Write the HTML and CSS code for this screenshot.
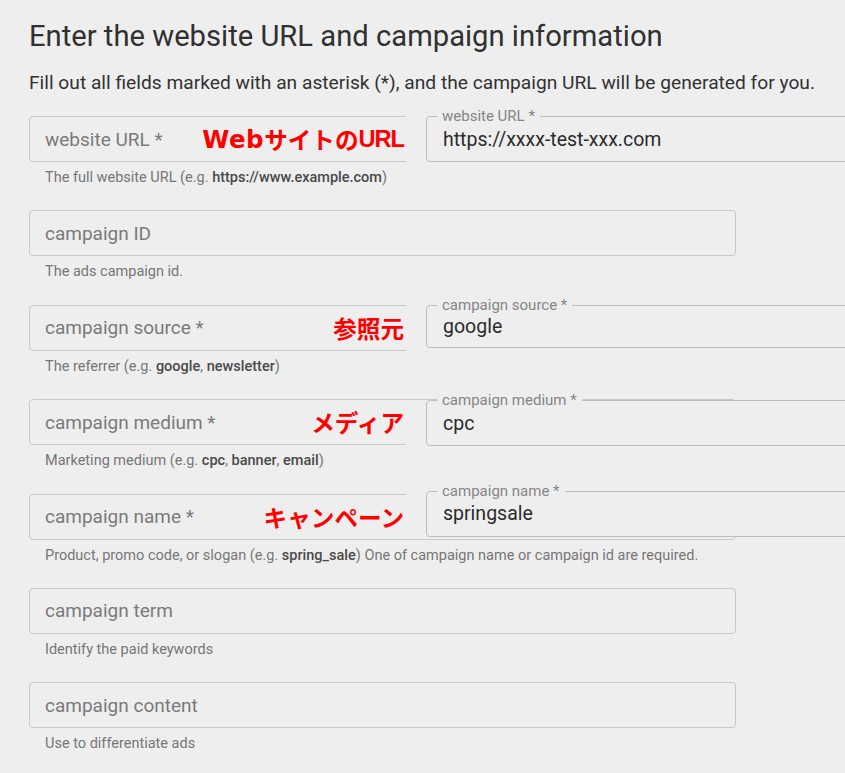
FILE: index.html
```html
<!DOCTYPE html>
<html lang="en">
<head>
<meta charset="utf-8">
<title>Campaign URL Builder</title>
<link rel="stylesheet" href="styles.css">
</head>
<body>
<main class="page">
  <h1 class="title">Enter the website URL and campaign information</h1>
  <p class="lead">Fill out all fields marked with an asterisk (*), and the campaign URL will be generated for you.</p>

  <div class="form">
    <div class="row">
      <div class="field">
        <span class="ph">website URL *</span>
        <span class="note"><span class="latin latin--wide">Web</span>サイトの<span class="latin latin--tight">URL</span></span>
        <div class="fill">
          <div class="fill-box">
            <span class="fill-label">website URL *</span>
            <span class="fill-value">https://xxxx-test-xxx.com</span>
          </div>
        </div>
      </div>
      <div class="help">The full website URL (e.g. <b>https://www.example.com</b>)</div>
    </div>

    <div class="row">
      <div class="field"><span class="ph">campaign ID</span></div>
      <div class="help">The ads campaign id.</div>
    </div>

    <div class="row">
      <div class="field">
        <span class="ph">campaign source *</span>
        <span class="note">参照元</span>
        <div class="fill fill--short">
          <div class="fill-box">
            <span class="fill-label">campaign source *</span>
            <span class="fill-value">google</span>
          </div>
        </div>
      </div>
      <div class="help">The referrer (e.g. <b>google</b>, <b>newsletter</b>)</div>
    </div>

    <div class="row">
      <div class="field">
        <span class="ph">campaign medium *</span>
        <span class="note">メディア</span>
        <div class="fill fill--low">
          <div class="fill-box">
            <span class="fill-label">campaign medium *</span>
            <span class="fill-value">cpc</span>
          </div>
        </div>
      </div>
      <div class="help">Marketing medium (e.g. <b>cpc</b>, <b>banner</b>, <b>email</b>)</div>
    </div>

    <div class="row">
      <div class="field">
        <span class="ph">campaign name *</span>
        <span class="note">キャンペーン</span>
        <div class="fill fill--high">
          <div class="fill-box">
            <span class="fill-label">campaign name *</span>
            <span class="fill-value">springsale</span>
          </div>
        </div>
      </div>
      <div class="help">Product, promo code, or slogan (e.g. <b>spring_sale</b>) One of campaign name or campaign id are required.</div>
    </div>

    <div class="row">
      <div class="field"><span class="ph">campaign term</span></div>
      <div class="help">Identify the paid keywords</div>
    </div>

    <div class="row">
      <div class="field"><span class="ph">campaign content</span></div>
      <div class="help">Use to differentiate ads</div>
    </div>
  </div>
</main>
</body>
</html>
```

FILE: styles.css
```css
html, body {
  margin: 0;
  padding: 0;
  background: #eeeeee;
  overflow: hidden;
}

.page {
  padding: 19px 0 0 29px;
  font-family: Roboto, "Noto Sans", sans-serif;
  color: #313131;
}

.title {
  margin: 0;
  font-size: 29.2px;
  line-height: 35px;
  font-weight: 400;
  color: #303030;
}

.lead {
  margin: 18px 0 0;
  font-size: 19.2px;
  line-height: 22px;
  color: #323232;
}

.form {
  margin-top: 22px;
  display: flex;
  flex-direction: column;
  gap: 24.4px;
}

.row {
  width: 707px;
}

.field {
  position: relative;
  box-sizing: border-box;
  height: 46px;
  border: 1px solid #c9c9c9;
  border-radius: 4px;
  padding: 0 15px;
  display: flex;
  align-items: center;
}

.ph {
  font-size: 19px;
  color: #7a7a7a;
}

.note {
  position: absolute;
  right: 331px;
  top: 0;
  bottom: 0;
  display: flex;
  align-items: center;
  font-family: "Noto Sans CJK JP", sans-serif;
  font-weight: 700;
  font-size: 23.6px;
  color: #ff0000;
  white-space: nowrap;
}

.note .latin {
  font-family: "Liberation Sans", Arial, sans-serif;
  font-weight: 700;
}

.note .latin--wide {
  font-family: "DejaVu Sans", "Liberation Sans", sans-serif;
  font-size: 24.5px;
  letter-spacing: 0.5px;
}

.note .latin--tight {
  letter-spacing: -1px;
}

.help {
  margin: 7px 0 0 16px;
  font-size: 14.5px;
  line-height: 17px;
  color: #767676;
  white-space: nowrap;
}

.help b {
  font-weight: 500;
  color: #4a4a4a;
}

.fill {
  position: absolute;
  left: 376px;
  top: -1px;
  bottom: -1px;
  width: 520px;
  background: #eeeeee;
  padding-left: 20px;
}

.fill--short .fill-box {
  height: 43px;
}

.fill--low {
  top: 0px;
  bottom: -2px;
}

.fill--high {
  top: -4px;
  bottom: 2px;
}

.fill-box {
  position: relative;
  box-sizing: border-box;
  height: 46px;
  border: 1px solid #bdbdbd;
  border-radius: 4px;
  padding: 0 16px;
  display: flex;
  align-items: center;
}

.fill-label {
  position: absolute;
  left: 10px;
  top: -9px;
  padding: 0 5px;
  background: #eeeeee;
  font-size: 15px;
  line-height: 16px;
  color: #858585;
}

.fill-value {
  font-size: 19.5px;
  color: #2b2b2b;
}
```
